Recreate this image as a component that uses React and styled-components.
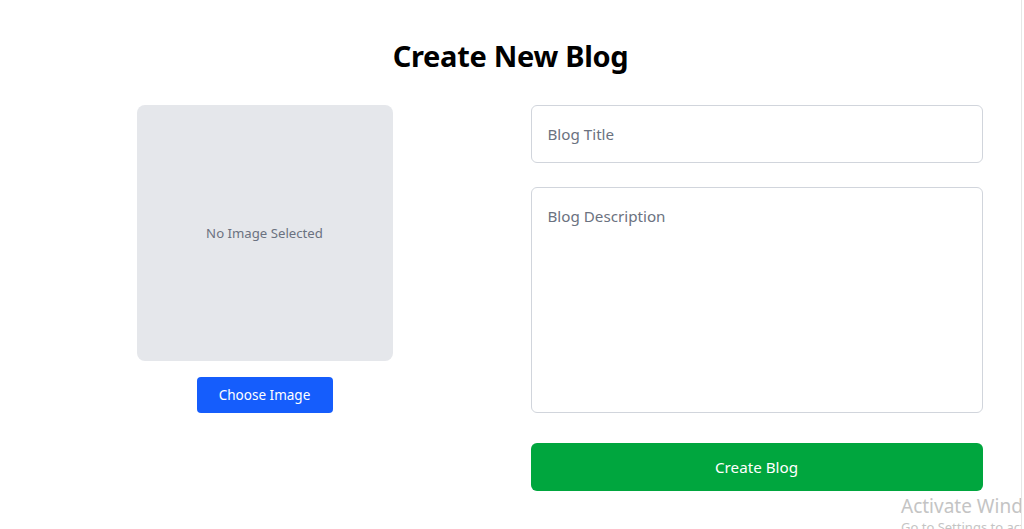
import React from "react";
import styled, { createGlobalStyle } from "styled-components";

const Global = createGlobalStyle`
  * { box-sizing: border-box; }
  html, body { margin: 0; padding: 0; background: #fff; }
  body { font-family: "Noto Sans", "Open Sans", sans-serif; color: #000; overflow: hidden; }
`;

const Page = styled.div`
  width: 1022px;
  height: 529px;
  border-right: 1px solid #e6e6e6;
  padding-top: 36px;
  position: relative;
  overflow: hidden;
`;

const Title = styled.h1`
  margin: 0 0 29px;
  text-align: center;
  font-size: 29px;
  line-height: 40px;
  font-weight: 700;
  letter-spacing: -0.3px;
`;

const Grid = styled.div`
  width: 944px;
  margin: 0 auto;
  display: grid;
  grid-template-columns: 1fr 1fr;
  column-gap: 40px;
`;

const LeftCol = styled.div`
  display: flex;
  flex-direction: column;
  align-items: center;
  gap: 16px;
`;

const Preview = styled.div`
  width: 256px;
  height: 256px;
  background: #e5e7eb;
  border-radius: 8px;
  display: flex;
  align-items: center;
  justify-content: center;
  color: #6b7280;
  font-size: 13.2px;
`;

const Button = styled.button`
  border: none;
  color: #fff;
  font-family: inherit;
  cursor: pointer;
  background: ${(p) => p.$bg};
  border-radius: ${(p) => p.$radius || "4px"};
  width: ${(p) => p.$width || "100%"};
  height: ${(p) => p.$height};
  font-size: ${(p) => p.$size || "15.2px"};
  padding: 0;
`;

const Form = styled.div`
  display: flex;
  flex-direction: column;
`;

const Input = styled.input`
  width: 100%;
  height: 58px;
  border: 1px solid #d1d5dc;
  border-radius: 6px;
  padding: 0 16px;
  font-family: inherit;
  font-size: 15.2px;
  outline: none;
  margin-bottom: 24px;
  &::placeholder { color: #6b7280; }
`;

const TextArea = styled.textarea`
  width: 100%;
  height: 226px;
  border: 1px solid #d1d5dc;
  border-radius: 6px;
  padding: 16px 16px;
  font-family: inherit;
  font-size: 15.2px;
  line-height: 24px;
  resize: none;
  outline: none;
  display: block;
  margin-bottom: 30px;
  &::placeholder { color: #6b7280; }
`;

const Watermark = styled.div`
  position: absolute;
  left: 901px;
  top: 497px;
  color: #c4c4c4;
  font-family: "Noto Sans", sans-serif;
  white-space: nowrap;
  pointer-events: none;
  line-height: 1;
`;

const WmBig = styled.div`
  font-size: 19px;
  margin-bottom: 5px;
`;

const WmSmall = styled.div`
  font-size: 13px;
`;

export default function App() {
  return (
    <>
      <Global />
      <Page>
        <Title>Create New Blog</Title>
        <Grid>
          <LeftCol>
            <Preview>No Image Selected</Preview>
            <Button $bg="#155dfc" $width="136px" $height="36px" $size="13.5px">
              Choose Image
            </Button>
          </LeftCol>
          <Form>
            <Input placeholder="Blog Title" />
            <TextArea placeholder="Blog Description" />
            <Button $bg="#00a63e" $height="48px" $radius="6px">
              Create Blog
            </Button>
          </Form>
        </Grid>
        <Watermark>
          <WmBig>Activate Windows</WmBig>
          <WmSmall>Go to Settings to activate Windows.</WmSmall>
        </Watermark>
      </Page>
    </>
  );
}
